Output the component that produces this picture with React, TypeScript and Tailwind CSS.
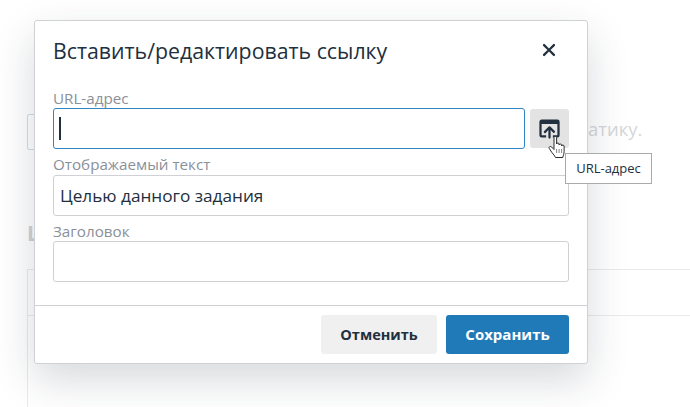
const labelClass = "block text-[15.2px] leading-[19px] text-[#8a9099]";
const inputClass =
  "block h-[41px] w-full rounded-[3px] border border-[#cfd1d4] bg-white px-[6px] text-[17.2px] text-[#222f3e] outline-none";

const UploadIcon = () => (
  <svg width="27" height="27" viewBox="0 0 24 24" fill="#222f3e">
    <path d="M19 4a2 2 0 0 1 2 2v12a2 2 0 0 1-2 2h-4v-2h4V8H5v10h4v2H5a2 2 0 0 1-2-2V6c0-1.100.9-2 2-2h14zm-8 9.400l-2.300 2.300a1 1 0 1 1-1.400-1.400l4-4a1 1 0 0 1 1.400 0l4 4a1 1 0 0 1-1.400 1.400L13 13.400V20a1 1 0 0 1-2 0v-6.600z" />
  </svg>
);

const HandCursor = () => (
  <svg width="19" height="23" viewBox="0 0 19 23" fill="none">
    <path
      d="M6 1.500c0-1.500 2.600-1.500 2.600 0V8c0-1.300 2.500-1.300 2.500 0v1c0-1.300 2.500-1.300 2.500 0v1c0-1.200 2.500-1.200 2.500 0v5.500c0 2.500-.8 3.500-1.300 6H7.500c-.7-1.800-2-3-3.500-4.800L1.300 12.500c-1-1.500 1-2.800 2.300-1.500L6 13.500z"
      fill="#fff"
      stroke="#2b2b2b"
      strokeWidth="1"
      strokeLinejoin="round"
    />
    <path d="M8.600 13v4M11.100 13v4M13.600 13v4" stroke="#666" strokeWidth="0.8" />
  </svg>
);

const CloseIcon = () => (
  <svg width="26" height="26" viewBox="0 0 24 24" fill="#222f3e">
    <path d="M17.300 8.200L13.400 12l3.900 3.800a1 1 0 0 1-1.500 1.500L12 13.400l-3.800 3.900a1 1 0 0 1-1.500-1.500l3.900-3.800-3.900-3.800a1 1 0 0 1 1.500-1.500l3.800 3.900 3.800-3.900a1 1 0 0 1 1.500 1.500z" />
  </svg>
);

// faded page behind the dialog
const Backdrop = () => (
  <div className="relative h-[407px] w-[690px] overflow-hidden bg-white">
    <div className="absolute left-[27px] top-[114px] h-[36px] w-[40px] rounded-[2px] border border-[#d3dbe6]" />
    <div className="absolute left-[588px] top-[116px] text-[18.5px] leading-[26px] text-[#d5d7da]">атику.</div>
    <div className="absolute left-[27px] top-[219px] text-[21px] font-bold leading-[28px] text-[#d0d2d5]">L</div>
    <div className="absolute left-[27px] top-[269px] h-[138px] w-[663px] border-l border-t border-[#e9eaec]">
      <div className="mt-[45px] border-t border-[#e9eaec]" />
    </div>
  </div>
);

export default function App() {
  return (
    <div className="relative h-[407px] w-[690px] overflow-hidden font-['Open_Sans',sans-serif]">
      <Backdrop />

      <div className="absolute left-[34px] top-[20px] flex h-[344px] w-[554px] flex-col rounded-[3px] border border-[#cfd1d4] bg-white shadow-[0_16px_40px_rgba(34,47,62,0.18)]">
        <div className="flex h-[62px] items-center justify-between pb-[2px] pl-[18px] pr-[25px]">
          <h1 className="text-[21.3px] leading-[26px] text-[#222f3e]">Вставить/редактировать ссылку</h1>
          <div className="-mt-[3px]">
            <CloseIcon />
          </div>
        </div>

        <div className="flex flex-1 flex-col px-[18px] pt-[6px]">
          <label className={labelClass}>URL-адрес</label>
          <div className="flex gap-[5px]">
            <div className="relative flex-1">
              <input className="block h-[41px] w-full rounded-[3px] border border-[#2f86c1] bg-white px-[6px] outline-none" />
              <div className="absolute left-[6px] top-[9px] h-[23px] w-[2px] bg-[#222f3e]" />
            </div>
            <button className="mt-px flex h-[39px] w-[39px] items-center justify-center rounded-[3px] bg-[#e3e3e3]">
              <UploadIcon />
            </button>
          </div>

          <label className={`${labelClass} mt-[6px]`}>Отображаемый текст</label>
          <input className={`${inputClass} mt-px`} defaultValue="Целью данного задания" />

          <label className={`${labelClass} mt-[6px]`}>Заголовок</label>
          <input className={inputClass} />
        </div>

        <div className="flex h-[58px] items-start justify-end gap-[9px] border-t border-[#cfd1d4] pr-[18px] pt-[9px]">
          <button className="h-[39px] w-[116px] rounded-[3px] bg-[#f0f0f0] text-[14.5px] font-bold text-[#222f3e]">
            Отменить
          </button>
          <button className="h-[39px] w-[123px] rounded-[3px] bg-[#207ab7] text-[15px] font-bold text-white">
            Сохранить
          </button>
        </div>
      </div>

      <div className="absolute left-[548px] top-[136px]">
        <HandCursor />
      </div>

      <div className="absolute left-[565px] top-[153px] flex h-[31px] w-[87px] items-center justify-center border border-[#a8abae] bg-white text-[13px] text-[#222f3e]">
        URL-адрес
      </div>
    </div>
  );
}
